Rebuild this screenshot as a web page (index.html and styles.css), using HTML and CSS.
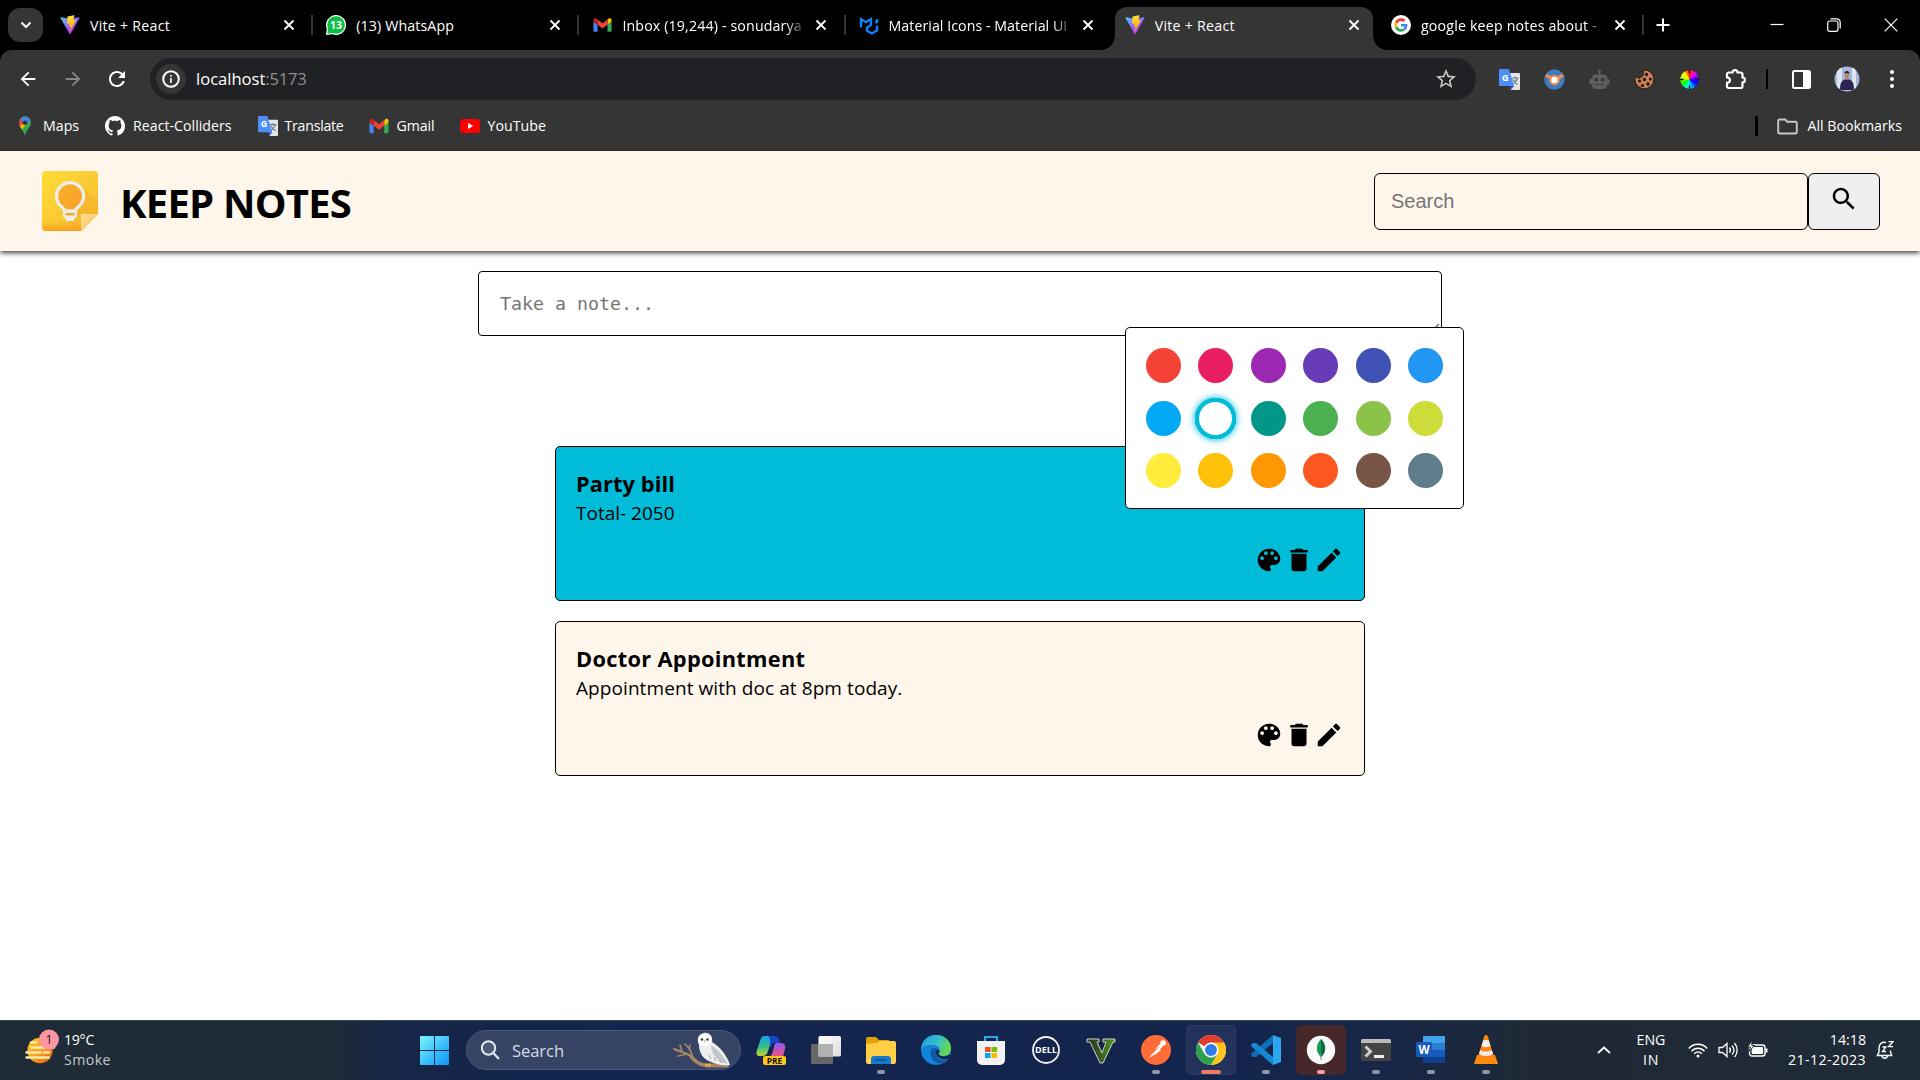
FILE: index.html
```html
<!DOCTYPE html>
<html lang="en">
<head>
<meta charset="utf-8">
<title>Vite + React</title>
<link rel="stylesheet" href="styles.css">
</head>
<body>
<svg class="sprite" aria-hidden="true">
  <defs>
    <linearGradient id="viteA" x1="6" y1="33" x2="235" y2="344" gradientUnits="userSpaceOnUse"><stop stop-color="#41D1FF"/><stop offset="1" stop-color="#BD34FE"/></linearGradient>
    <linearGradient id="viteB" x1="194.651" y1="8.818" x2="236.076" y2="292.989" gradientUnits="userSpaceOnUse"><stop stop-color="#FFEA83"/><stop offset=".083" stop-color="#FFDD35"/><stop offset="1" stop-color="#FFA800"/></linearGradient>
  </defs>
  <symbol id="vite" viewBox="0 0 410 404">
    <path fill="url(#viteA)" d="M399.641 59.5246L215.643 388.545C211.844 395.338 202.084 395.378 198.228 388.618L10.5817 59.5563C6.38087 52.1896 12.6802 43.2665 21.0281 44.7586L205.223 77.6824C206.398 77.8924 207.601 77.8904 208.776 77.6763L389.119 44.8058C397.439 43.2894 403.768 52.1434 399.641 59.5246Z"/>
    <path fill="url(#viteB)" d="M292.965 1.5744L156.801 28.2552C154.563 28.6937 152.906 30.5903 152.771 32.8664L144.395 174.33C144.198 177.662 147.258 180.248 150.51 179.498L188.42 170.749C191.967 169.931 195.172 173.055 194.443 176.622L183.18 231.775C182.422 235.487 185.907 238.661 189.532 237.56L212.947 230.446C216.577 229.344 220.065 232.527 219.297 236.242L201.398 322.875C200.278 328.294 207.486 331.249 210.492 326.603L212.5 323.5L323.454 102.072C325.312 98.3645 322.108 94.137 318.036 94.9228L279.014 102.454C275.347 103.161 272.227 99.746 273.262 96.1583L298.731 7.86689C299.767 4.27314 296.636 0.855181 292.965 1.5744Z"/>
  </symbol>
  <symbol id="gmail" viewBox="50 38 92 74">
    <path fill="#4285f4" d="M58 108h14V74L52 59v43c0 3.32 2.69 6 6 6"/><path fill="#34a853" d="M120 108h14c3.32 0 6-2.69 6-6V59l-20 15"/><path fill="#fbbc04" d="M120 48v26l20-15v-8c0-7.42-8.47-11.65-14.4-7.2"/><path fill="#ea4335" d="M72 74V48l24 18 24-18v26L96 92"/><path fill="#c5221f" d="M52 51v8l20 15V48l-5.6-4.2c-5.94-4.45-14.4-.22-14.4 7.2"/>
  </symbol>
  <symbol id="close" viewBox="0 0 12 12"><path d="M1.500 1.500l9 9m0-9l-9 9" stroke="#fff" stroke-width="1.800" fill="none"/></symbol>
  <symbol id="palette" viewBox="0 0 24 24"><path d="M12 3c-4.970 0-9 4.030-9 9s4.030 9 9 9c.83 0 1.500-.67 1.500-1.500 0-.39-.15-.74-.39-1.010-.23-.26-.38-.61-.38-.99 0-.83.67-1.500 1.500-1.500H16c2.760 0 5-2.240 5-5 0-4.420-4.030-8-9-8zm-5.500 9c-.83 0-1.500-.67-1.500-1.500S5.670 9 6.500 9 8 9.670 8 10.500 7.330 12 6.500 12zm3-4C8.670 8 8 7.330 8 6.500S8.670 5 9.500 5s1.500.67 1.500 1.500S10.330 8 9.500 8zm5 0c-.83 0-1.500-.67-1.500-1.500S13.670 5 14.500 5s1.500.67 1.500 1.500S15.330 8 14.500 8zm3 4c-.83 0-1.500-.67-1.500-1.500S16.670 9 17.500 9s1.500.67 1.500 1.500-.67 1.500-1.500 1.500z"/></symbol>
  <symbol id="trash" viewBox="0 0 24 24"><path d="M6 19c0 1.100.9 2 2 2h8c1.100 0 2-.9 2-2V7H6v12zM19 4h-3.500l-1-1h-5l-1 1H5v2h14V4z"/></symbol>
  <symbol id="pencil" viewBox="0 0 24 24"><path d="M3 17.250V21h3.750L17.810 9.940l-3.750-3.750L3 17.250zM20.710 7.040c.39-.39.39-1.020 0-1.410l-2.340-2.340c-.39-.39-1.020-.39-1.410 0l-1.830 1.830 3.750 3.750 1.830-1.830z"/></symbol>
  <symbol id="arrow" viewBox="0 0 24 24"><path d="M20 11H7.830l5.590-5.590L12 4l-8 8 8 8 1.410-1.410L7.830 13H20v-2z"/></symbol>
</svg>

<div class="tabstrip">
  <div class="tab-search"><svg width="12" height="8" viewBox="0 0 12 8"><path d="M1.500 1.500L6 6l4.500-4.500" fill="none" stroke="#fff" stroke-width="2"/></svg></div>
  <div class="tab">
    <svg class="favicon"><use href="#vite"/></svg><span class="tab-title t1">Vite + React</span><svg class="tab-close"><use href="#close"/></svg>
  </div>
  <div class="tab">
    <svg class="favicon" viewBox="0 0 20 20"><path fill="#fff" d="M10 0a10 10 0 1 1-3.600 19.300L0 20l.8-6.100A10 10 0 0 1 10 0z"/><path fill="#0bc143" d="M10 1.200a8.800 8.800 0 1 1-3.400 16.900L1.500 18.700l.6-5A8.800 8.800 0 0 1 10 1.200z"/><text x="10" y="13.800" text-anchor="middle" class="logo-text" font-size="10.500" fill="#fff">13</text></svg><span class="tab-title t2">(13) WhatsApp</span><svg class="tab-close"><use href="#close"/></svg>
  </div>
  <div class="tab">
    <svg class="favicon gm"><use href="#gmail"/></svg><span class="tab-title t3 fade">Inbox (19,244) - sonudarya</span><svg class="tab-close"><use href="#close"/></svg>
  </div>
  <div class="tab plain">
    <svg class="favicon" viewBox="0 0 20 20"><path d="M2 12.500V4l5 3.200L12 4v6l-4 2.600v3.200l5 2.600 5-3V10.500M18 4v2.800l-1.800 1.100" fill="none" stroke="#0a84ff" stroke-width="2.300"/></svg><span class="tab-title t4 fade">Material Icons - Material UI</span><svg class="tab-close"><use href="#close"/></svg>
  </div>
  <div class="tab active">
    <svg class="favicon"><use href="#vite"/></svg><span class="tab-title t1">Vite + React</span><svg class="tab-close"><use href="#close"/></svg>
  </div>
  <div class="tab">
    <svg class="favicon" viewBox="-12 -12 72 72"><circle cx="24" cy="24" r="36" fill="#fff"/><path fill="#EA4335" d="M24 9.500c3.540 0 6.710 1.220 9.210 3.600l6.850-6.850C35.900 2.380 30.470 0 24 0 14.620 0 6.510 5.380 2.560 13.220l7.980 6.190C12.430 13.720 17.740 9.500 24 9.500z"/><path fill="#4285F4" d="M46.980 24.550c0-1.570-.15-3.090-.38-4.550H24v9.020h12.940c-.58 2.960-2.260 5.480-4.780 7.180l7.730 6c4.510-4.180 7.090-10.360 7.090-17.650z"/><path fill="#FBBC05" d="M10.530 28.590c-.48-1.450-.76-2.990-.76-4.590s.27-3.140.76-4.590l-7.980-6.190C.92 16.460 0 20.120 0 24c0 3.880.92 7.540 2.560 10.780l7.970-6.190z"/><path fill="#34A853" d="M24 48c6.480 0 11.930-2.130 15.890-5.810l-7.730-6c-2.150 1.450-4.920 2.300-8.160 2.300-6.260 0-11.570-4.220-13.470-9.910l-7.980 6.190C6.510 42.620 14.620 48 24 48z"/></svg><span class="tab-title t6 fade">google keep notes about -</span><svg class="tab-close"><use href="#close"/></svg>
  </div>
  <svg class="new-tab" viewBox="0 0 14 14"><path d="M7 .5v13M.5 7h13" stroke="#fff" stroke-width="2"/></svg>
  <div class="window-buttons">
    <svg width="14" height="14" viewBox="0 0 14 14"><path d="M.5 6.500h13" stroke="#fff" stroke-width="1.200"/></svg>
    <svg width="14" height="14" viewBox="0 0 14 14" fill="none" stroke="#fff" stroke-width="1.200"><rect x=".7" y="3" width="10.300" height="10.300" rx="2"/><path d="M3.500.8h6.200a3.500 3.500 0 0 1 3.500 3.500v6.200"/></svg>
    <svg width="14" height="14" viewBox="0 0 14 14"><path d="M.7.7l12.600 12.600m0-12.600L.7 13.300" stroke="#fff" stroke-width="1.200"/></svg>
  </div>
</div>

<div class="toolbar-wrap">
<div class="toolbar">
  <svg class="nav-icon"><use href="#arrow"/></svg>
  <svg class="nav-icon forward"><use href="#arrow"/></svg>
  <svg class="nav-icon reload" viewBox="0 0 24 24"><path d="M17.650 6.350C16.200 4.900 14.210 4 12 4c-4.420 0-7.990 3.580-7.990 8s3.570 8 7.990 8c3.730 0 6.840-2.550 7.730-6h-2.080c-.82 2.330-3.040 4-5.650 4-3.310 0-6-2.690-6-6s2.690-6 6-6c1.660 0 3.140.69 4.220 1.780L13 11h7V4l-2.350 2.350z"/></svg>
  <div class="omnibox">
    <div class="site-info"><svg width="20" height="20" viewBox="0 0 20 20"><circle cx="10" cy="10" r="7.800" fill="none" stroke="#fff" stroke-width="2"/><path d="M9.200 9h1.600v5H9.200zM9.200 6h1.600v1.700H9.200z" fill="#fff"/></svg></div>
    <span class="url">localhost</span><span class="url port">:5173</span>
    <svg class="star" viewBox="0 0 24 24"><path d="M22 9.240l-7.190-.62L12 2 9.190 8.630 2 9.240l5.460 4.730L5.820 21 12 17.270 18.180 21l-1.630-7.030L22 9.240zM12 15.400l-3.760 2.270 1-4.280-3.320-2.880 4.380-.38L12 6.100l1.710 4.040 4.380.38-3.320 2.880 1 4.280L12 15.400z"/></svg>
  </div>
  <div class="extensions">
    <svg class="ext" viewBox="0 0 21 21"><path fill="#e4e4e4" d="M9 4h11a1 1 0 0 1 1 1v15a1 1 0 0 1-1 1h-8z"/><path d="M12.500 9h7M16 7.500V9m2.200 0c-.6 2.600-2.200 4.600-4.600 6M13.800 10.500c1 2 2.400 3.500 4.700 5" fill="none" stroke="#607d8b" stroke-width="1.200"/><path fill="#3545c7" d="M11 17h4l-3.300 4z"/><path fill="#4d8ef7" d="M1 0h9l5 17H1a1 1 0 0 1-1-1V1a1 1 0 0 1 1-1z"/><text x="2.800" y="12" class="logo-text" font-size="9.500" fill="#fff">G</text></svg>
    <svg class="ext" viewBox="0 0 21 21"><circle cx="10.500" cy="10.500" r="10.200" fill="#3d7cc0"/><path d="M.8 7l2.400-2 5 2.500h4.600l5-2.500 2.400 2-4.700 3.500-1.200 3H6.700l-1.200-3z" fill="#ee8a4a"/><circle cx="10.500" cy="11" r="5.300" fill="#ee8a4a"/><circle cx="10.500" cy="11" r="3.200" fill="#fff"/></svg>
    <svg class="ext" viewBox="0 0 21 21"><path d="M10.500 1v5" stroke="#5d5d5d" stroke-width="1.400"/><circle cx="10.500" cy="2.200" r="1.400" fill="#5d5d5d"/><rect x="3" y="5.500" width="15" height="14.500" rx="4" fill="#5d5d5d"/><rect x=".3" y="9.500" width="20.400" height="6" rx="2.500" fill="#5d5d5d"/><path d="M6 9.500h2.500v2.500H6zM12.500 9.500H15v2.500h-2.500zM6 15.500h9" fill="#353535" stroke="#353535" stroke-width=".7"/></svg>
    <svg class="ext" viewBox="0 0 21 21"><path d="M9 1c1 1 1 2.500 0 3.500 1 1.500 0 3-1.500 3-.5 1.800-3 2.200-4.500 1L1.500 7A9.500 9.500 0 1 0 9 1z" fill="#c98055" stroke="#1d1510" stroke-width="1"/><g fill="#20140d"><circle cx="12.500" cy="5.500" r="1.700"/><circle cx="16.300" cy="10" r="1.500"/><circle cx="10.500" cy="10.500" r="1.700"/><circle cx="5.500" cy="12" r="1.500"/><circle cx="8.500" cy="16.500" r="1.600"/><circle cx="14" cy="15" r="1.700"/></g></svg>
    <div class="ext wheel"><svg viewBox="0 0 21 21" width="21" height="21" fill="none" stroke="#111" stroke-width="1.300"><path d="M10.500 .5v4M10.500 16.500v4M.5 10.500h4M16.500 10.500h4"/></svg></div>
    <svg class="ext puzzle" viewBox="0 0 21 21"><path d="M2 5.200c0-1 .7-1.700 1.700-1.700H7.500c0-3.200 5-3.200 5 0h3c1.200 0 2 .8 2 1.900V8.500c3.200 0 3.200 5 0 5v3.700c0 1-.8 1.800-1.800 1.800H3.600c-.9 0-1.600-.7-1.600-1.600v-3.600c4 0 4-5.500 0-5.500z" fill="none" stroke="#fff" stroke-width="2.200"/></svg>
    <span class="bar"></span>
    <svg class="panel" viewBox="0 0 19 19"><rect x="1" y="1" width="17" height="17" rx="1.500" fill="none" stroke="#fff" stroke-width="2"/><path d="M11 1h7v17h-7z" fill="#fff"/></svg>
    <svg class="avatar" viewBox="0 0 26 26"><defs><clipPath id="av"><circle cx="13" cy="13" r="12.500"/></clipPath></defs><g clip-path="url(#av)"><path fill="#a3b7dc" d="M0 0h26v26H0z"/><path fill="#dfe6f2" d="M3 0h5v26H3zM18 0h4v26h-4z"/><path fill="#2d2350" d="M6 24c0-6 1-9 4.500-10.500h5C19 15 20 18 20 24z"/><path fill="#b98567" d="M11 6h4v6l-2 2-2-2z"/><path fill="#1a1416" d="M10.500 8c-.5-4 5-4 5 0l-1-1h-3z"/></g></svg>
    <svg class="menu-dots" viewBox="0 0 6 20" fill="#fff"><circle cx="3" cy="3" r="2"/><circle cx="3" cy="10" r="2"/><circle cx="3" cy="17" r="2"/></svg>
  </div>
</div>
<div class="bookmarks">
  <svg class="bm-icon" viewBox="-3 0 20 20"><path d="M7 0a7 7 0 0 1 6 6.500C13 11.500 8.500 13 7 20 5.500 13.500 1 12 1 7a6.500 6.500 0 0 1 6-7z" fill="#34a853"/><path d="M2.300 2.800L6 5.700 2 10.500C.5 8 .8 5 2.300 2.800z" fill="#ea4335"/><path d="M2 10.500L10 2.500 12 4 4 13.500z" fill="#fbbc04"/><path d="M2.300 2.800A6.500 6.500 0 0 1 12.500 4L9.500 7.500 5 6z" fill="#4285f4"/><circle cx="7" cy="6.800" r="2.300" fill="#333"/></svg>
  <span class="bm b1">Maps</span>
  <svg class="bm-icon" viewBox="0 0 16 16"><path fill="#fff" d="M8 0C3.580 0 0 3.580 0 8c0 3.540 2.290 6.530 5.470 7.590.4.07.55-.17.55-.38 0-.19-.01-.82-.01-1.490-2.010.37-2.530-.49-2.690-.94-.09-.23-.48-.94-.82-1.130-.28-.15-.68-.52-.01-.53.63-.01 1.080.58 1.230.82.72 1.210 1.870.87 2.330.66.07-.52.28-.87.51-1.070-1.780-.2-3.640-.89-3.640-3.950 0-.87.31-1.590.82-2.150-.08-.2-.36-1.020.08-2.120 0 0 .67-.21 2.200.82.64-.18 1.320-.27 2-.27.68 0 1.360.09 2 .27 1.530-1.040 2.200-.82 2.200-.82.44 1.100.16 1.920.08 2.120.51.56.82 1.270.82 2.150 0 3.070-1.870 3.750-3.650 3.950.29.25.54.73.54 1.480 0 1.070-.01 1.930-.01 2.200 0 .21.15.46.55.38A8.013 8.013 0 0 0 16 8c0-4.420-3.580-8-8-8z"/></svg>
  <span class="bm b2">React-Colliders</span>
  <svg class="bm-icon tr" viewBox="0 0 21 21"><path fill="#e4e4e4" d="M9 4h11a1 1 0 0 1 1 1v15a1 1 0 0 1-1 1h-8z"/><path d="M12.500 9h7M16 7.500V9m2.200 0c-.6 2.600-2.200 4.600-4.600 6M13.800 10.500c1 2 2.400 3.500 4.700 5" fill="none" stroke="#607d8b" stroke-width="1.200"/><path fill="#3545c7" d="M11 17h4l-3.300 4z"/><path fill="#4d8ef7" d="M1 0h9l5 17H1a1 1 0 0 1-1-1V1a1 1 0 0 1 1-1z"/><text x="2.800" y="12" class="logo-text" font-size="9.500" fill="#fff">G</text></svg>
  <span class="bm b3">Translate</span>
  <svg class="bm-icon"><use href="#gmail"/></svg>
  <span class="bm b4">Gmail</span>
  <svg class="bm-icon" viewBox="0 0 20 20"><rect x="0" y="3" width="20" height="14" rx="3.500" fill="#f00"/><path d="M8 7l5.200 3L8 13z" fill="#fff"/></svg>
  <span class="bm b5">YouTube</span>
  <span class="bm-bar"></span>
  <svg class="folder" viewBox="0 0 21 17"><path d="M2.500 1.500h5.700l2 2.300h8.300c.8 0 1.300.5 1.300 1.300v9c0 .8-.5 1.400-1.300 1.400h-16c-.8 0-1.300-.6-1.300-1.400V2.900c0-.8.5-1.400 1.300-1.400z" fill="none" stroke="#c7c7c7" stroke-width="1.900"/></svg>
  <span class="bm b6">All Bookmarks</span>
</div>
</div>

<header class="app-header">
  <svg class="logo" viewBox="0 0 56 60">
    <defs>
      <linearGradient id="kp" x1="0" y1="0" x2="1" y2="1"><stop offset="0" stop-color="#ffdb38"/><stop offset=".3" stop-color="#fdd335"/><stop offset="1" stop-color="#f4b62c"/></linearGradient>
      <linearGradient id="kb" x1="0" y1="0" x2="0" y2="1"><stop offset="0" stop-color="#f9a825" stop-opacity="0"/><stop offset="1" stop-color="#f9a01f"/></linearGradient>
      <linearGradient id="kl" x1="0" y1="0" x2="1" y2="1"><stop offset="0" stop-color="#fbb62b"/><stop offset="1" stop-color="#f79c28"/></linearGradient>
      <linearGradient id="kf" x1="0" y1="0" x2="1" y2="1"><stop offset="0" stop-color="#ffe09a"/><stop offset="1" stop-color="#f9bc45"/></linearGradient>
    </defs>
    <path fill="url(#kp)" d="M4 0h48a4 4 0 0 1 4 4v39L39 60H4a4 4 0 0 1-4-4V4a4 4 0 0 1 4-4z"/>
    <path fill="#f6b42c" opacity=".7" d="M39 16l17 15v12H41L35 50l6 8-2 2-14-11 8-8z"/>
    <path fill="url(#kb)" d="M0 50h49L39 60H4a4 4 0 0 1-4-4z"/>
    <circle cx="28" cy="25" r="13" fill="url(#kl)"/>
    <path d="M22.500 40c0-2-1-2.600-3-4.400a13.500 13.500 0 1 1 17 0c-2 1.800-3 2.400-3 4.400z" fill="none" stroke="#ededed" stroke-width="3.200"/>
    <path d="M21 39h14v6a2 2 0 0 1-2 2l-1.500 3h-7L23 47a2 2 0 0 1-2-2z" fill="#ededed"/><path d="M23.500 42h9v2.500h-9z" fill="#f5a92b"/>
    <path fill="url(#kf)" d="M39 60V43h17z"/>
  </svg>
  <h1 class="brand">KEEP NOTES</h1>
  <div class="search">Search</div>
  <div class="search-button"><svg viewBox="0 0 24 24" width="30" height="30"><path d="M15.500 14h-.79l-.28-.27C15.410 12.590 16 11.110 16 9.500 16 5.910 13.090 3 9.500 3S3 5.910 3 9.500 5.910 16 9.500 16c1.610 0 3.090-.59 4.230-1.570l.27.28v.79l5 4.990L20.490 19l-4.990-5zm-6 0C7.010 14 5 11.990 5 9.500S7.010 5 9.500 5 14 7.010 14 9.500 11.990 14 9.500 14z"/></svg></div>
</header>

<main class="page">
  <div class="compose"><span>Take a note...</span><svg class="grip" viewBox="0 0 12 12"><path d="M1 11L11 1M7 11l4-4" stroke="#666" stroke-width="1.300"/></svg></div>
  <section class="notes">
    <article class="note cyan">
      <h2 class="n1">Party bill</h2>
      <p class="n2">Total- 2050</p>
      <div class="actions"><svg><use href="#palette"/></svg><svg><use href="#trash"/></svg><svg><use href="#pencil"/></svg></div>
      <div class="picker">
        <i class="red"></i><i class="pink"></i><i class="purple"></i><i class="violet"></i><i class="indigo"></i><i class="blue"></i>
        <i class="sky"></i><i class="selected"></i><i class="teal"></i><i class="green"></i><i class="light-green"></i><i class="lime"></i>
        <i class="yellow"></i><i class="amber"></i><i class="orange"></i><i class="deep-orange"></i><i class="brown"></i><i class="slate"></i>
      </div>
    </article>
    <article class="note">
      <h2 class="n3">Doctor Appointment</h2>
      <p class="n4">Appointment with doc at 8pm today.</p>
      <div class="actions"><svg><use href="#palette"/></svg><svg><use href="#trash"/></svg><svg><use href="#pencil"/></svg></div>
    </article>
  </section>
</main>

<footer class="taskbar">
  <div class="weather">
    <svg width="36" height="36" viewBox="0 0 36 36"><defs><linearGradient id="sun" x1="0" y1="0" x2="1" y2="1"><stop offset="0" stop-color="#ffc61a"/><stop offset=".5" stop-color="#fba31a"/><stop offset="1" stop-color="#e0560f"/></linearGradient></defs><circle cx="16" cy="21.500" r="12.700" fill="url(#sun)"/><g stroke="#ffe9b0" stroke-width="2.500" stroke-linecap="round"><path d="M7 13.500h5M7 18.500h23M2.500 23.500h14M20 23.500h5M2.500 28.500h22"/></g><circle cx="25" cy="10.500" r="10" fill="#fb95a3"/><text x="25" y="15" text-anchor="middle" class="badge-text" font-size="13">1</text></svg>
    <div class="weather-text"><span class="w1">19°C</span><span class="w2">Smoke</span></div>
  </div>
  <svg class="start" viewBox="0 0 29 29"><defs><linearGradient id="win" x1="0" y1="0" x2="1" y2="1" ><stop offset="0" stop-color="#7df3fd"/><stop offset="1" stop-color="#0a95fb"/></linearGradient></defs><path fill="url(#win)" d="M1 0h13v14H0V1a1 1 0 0 1 1-1zM15 0h13a1 1 0 0 1 1 1v13H15zM0 15h14v14H1a1 1 0 0 1-1-1zM15 15h14v13a1 1 0 0 1-1 1H15z"/></svg>
  <div class="task-search">
    <svg width="20" height="20" viewBox="0 0 20 20"><circle cx="8.500" cy="8" r="6.700" fill="rgba(255,255,255,.12)" stroke="#e3e7ee" stroke-width="2"/><path d="M13.300 13l5 5.200" stroke="#e3e7ee" stroke-width="2.300" stroke-linecap="round"/></svg>
    <span class="ts">Search</span>
    <svg class="owl" width="60" height="36" viewBox="0 0 60 36">
      <g fill="none" stroke="#a58863" stroke-linecap="round" stroke-linejoin="round"><path d="M1 17c7 3 13 4 18 8" stroke-width="2"/><path d="M18 24c4 6 8 9 16 9.500h20" stroke-width="4"/><path d="M9 19.500L7 13M19 25c0-6-3-9-7-13M16 17l1-4M14 22L5 24" stroke-width="1.700"/></g>
      <path d="M31 1c6-1 9 4 8 9 8 5 15 13 18 23-8 1-14-1-19-3-8-3-12-9-12-17C23 6 26 2 31 1z" fill="#eceef0"/>
      <path d="M38 13c7 4 12 11 17 19-9-1-16-8-17-19z" fill="#c3c7cb"/><path d="M25 8c0-7 12-8 13-1 1 5-2 7-6 7-3 0-7-2-7-6z" fill="#fff"/>
      <path d="M36 23l2 4M41 25l2 4M46 28l3 3" stroke="#999fa5" stroke-width="1"/>
      <circle cx="29" cy="7.500" r="1.200" fill="#333"/><circle cx="34.500" cy="7.500" r="1.200" fill="#333"/><path d="M31 8.500h1.600l-.8 2.500z" fill="#c8926b"/><path d="M32 33h6" stroke="#f3a73c" stroke-width="2.500"/>
    </svg>
  </div>
  <div class="apps">
    <div class="app"><svg viewBox="0 0 30 30"><defs><linearGradient id="cpa" x1="0" y1="0" x2="0" y2="1"><stop offset="0" stop-color="#1fa0ee"/><stop offset=".5" stop-color="#2dbb8e"/><stop offset="1" stop-color="#c4d32d"/></linearGradient><linearGradient id="cpb" x1="0" y1="0" x2="0" y2="1"><stop offset="0" stop-color="#8d5bf1"/><stop offset="1" stop-color="#f0527a"/></linearGradient></defs><path fill="url(#cpa)" d="M9 1h10c-3 1-4 5-5 9l-2 6c-1 4-3 5-6 5H4c-4 0-4-3-3-6l3-9c1-3 2-5 5-5z"/><path fill="#1743c4" d="M12 1h7c3 0 4 2 5 7h-5c-2 0-3 1-4 4h-1c0-5 1-9-2-11z"/><path fill="url(#cpb)" d="M20 8h5c4 0 5 3 4 6l-2 8H13c3-1 4-6 5-10 0-2 1-3 2-4z"/><rect x="7" y="21" width="23" height="9" rx="2" fill="#ffc61a"/><text x="18.500" y="28.500" text-anchor="middle" class="logo-text" font-size="8.300" fill="#111">PRE</text></svg></div>
    <div class="app"><svg viewBox="0 0 30 30"><defs><linearGradient id="tv" x1="0" y1="0" x2="1" y2="1"><stop stop-color="#fff"/><stop offset="1" stop-color="#ddd"/></linearGradient></defs><rect x="0" y="9" width="22" height="20" rx="1.500" fill="#666"/><rect x="7.500" y="1" width="22.500" height="20.500" rx="1.500" fill="url(#tv)"/><path d="M7.500 9H22v12.500H7.500z" fill="#b1b1b1"/></svg></div>
    <div class="app"><svg viewBox="0 0 30 30"><path d="M0 4a2 2 0 0 1 2-2h8l3 3h10v8H0z" fill="#e3a008"/><path d="M0 9l11-1 2-2h15a2 2 0 0 1 2 2v19a2 2 0 0 1-2 2H2a2 2 0 0 1-2-2z" fill="#ffcf45"/><path d="M5 29v-5a3 3 0 0 1 3-3h14a3 3 0 0 1 3 3v5z" fill="#1a79cd"/><path d="M9 25h12" stroke="#0d4f92" stroke-width="1.500"/></svg><b></b></div>
    <div class="app"><svg viewBox="0 0 30 30"><defs><linearGradient id="ea" x1="0" y1="0" x2="1" y2=".4"><stop offset="0" stop-color="#1b9de2"/><stop offset=".6" stop-color="#35c1c9"/><stop offset="1" stop-color="#66d84b"/></linearGradient></defs><circle cx="15" cy="15" r="15" fill="#1382d8"/><path fill="url(#ea)" d="M0 14C1 5 7 0 15 0c9 0 15 6 15 13 0 5-3 8-8 8-4 0-5-2-4-3 1-2 2-7-5-8C7 9 2 11 0 14z"/><path fill="#0c59a4" d="M10 15c-2 9 5 15 13 13 3-1 4-3 5-4-7 3-13 0-13-5 0-2 0-3 1-4-1-3-5-2-6 0z"/><path fill="#14254c" d="M16 14.500c2 0 3.500 1 2 3-1 1.500 0 3 3 3.700 3 .5 6-.5 8.500-2l-1 4c-6 2.500-11 .5-13-3.500-.7-2-.5-4 .5-5.200z"/></svg></div>
    <div class="app"><svg viewBox="0 0 30 30"><path d="M9 7V2h12v5" fill="none" stroke="#28a8ea" stroke-width="2.200"/><path d="M1 6h28v19a5 5 0 0 1-5 5H6a5 5 0 0 1-5-5z" fill="#f2f2f2"/><path fill="#f25022" d="M9 12h5.500v5H9z"/><path fill="#7fba00" d="M15.500 12H21v5h-5.500z"/><path fill="#00a4ef" d="M9 18h5.500v5H9z"/><path fill="#ffb900" d="M15.500 18H21v5h-5.500z"/></svg></div>
    <div class="app"><svg viewBox="0 0 30 30"><circle cx="15" cy="15" r="13" fill="none" stroke="#f1f1f1" stroke-width="1.800"/><text x="15" y="18.200" text-anchor="middle" class="logo-text" font-size="8.300" fill="#fff" textLength="22" lengthAdjust="spacingAndGlyphs">DELL</text></svg></div>
    <div class="app"><svg viewBox="0 0 30 30"><defs><linearGradient id="vg" x1="0" y1="0" x2="1" y2="0"><stop offset=".2" stop-color="#2f3e24"/><stop offset="1" stop-color="#4f9c20"/></linearGradient></defs><path d="M1 4h12v3h-2l5 11 4-11h-3V4h12v3h-2L17 28h-3L4 7H1z" fill="url(#vg)" stroke="#cfd0c8" stroke-width="1"/></svg></div>
    <div class="app"><svg viewBox="0 0 30 30"><circle cx="15" cy="15" r="15" fill="#ff6c37"/><path d="M7 23l10-11 3 3-5 4z" fill="#fff"/><path d="M15 13l4-4 3 2-5 5z" fill="#fff"/><circle cx="22" cy="8" r="2.800" fill="#fff"/><path d="M8 22l10-10" stroke="#ff6c37" stroke-width=".7"/></svg><b></b></div>
    <div class="app current"><svg viewBox="0 0 48 48"><circle cx="24" cy="24" r="24" fill="#fff"/><path d="M24 24L3.200 12A24 24 0 0 1 44.800 12z" fill="#e33b2e"/><path d="M24 12h20.800A24 24 0 0 1 24 48l10.400-18z" fill="#fcc41d"/><path d="M3.200 12A24 24 0 0 0 24 48l10.400-18L24 36 13.600 30z" fill="#2ea04d"/><circle cx="24" cy="24" r="12" fill="#fff"/><circle cx="24" cy="24" r="9.500" fill="#2f7bea"/></svg><b></b></div>
    <div class="app"><svg viewBox="0 0 30 30"><path d="M22 0v8L5 22H2l-2-2v-1z" fill="#0f6fb8"/><path d="M22 30v-8L5 8H2l-2 2v1z" fill="#1689d5"/><path d="M22 0l8 3v24l-8 3z" fill="#2ba7f2"/></svg><b></b></div>
    <div class="app alert"><svg viewBox="0 0 30 30"><circle cx="15" cy="15" r="14.200" fill="#fafafa"/><path d="M15 4c5 5 6 13 0 18-6-5-5-13 0-18z" fill="#12a150"/><path d="M15 4c5 5 6 13 0 18z" fill="#0b6b45"/><path d="M14.600 18h.9v7h-.9z" fill="#77837c"/></svg><b></b></div>
    <div class="app"><svg viewBox="0 0 30 30"><rect y="4" width="30" height="22" rx="1.500" fill="#444"/><path d="M0 8V5.500A1.500 1.500 0 0 1 1.500 4h27A1.500 1.500 0 0 1 30 5.500V8z" fill="#bbb"/><path d="M4.500 11.500l5 5-5 5" fill="none" stroke="#ccc" stroke-width="3"/><path d="M13 21.500h10" stroke="#eee" stroke-width="3"/></svg><b></b></div>
    <div class="app"><svg viewBox="0 0 30 30"><path fill="#41a5ee" d="M8 1h20a1 1 0 0 1 1 1v6H7V2a1 1 0 0 1 1-1z"/><path fill="#2b7cd3" d="M7 8h22v7H7z"/><path fill="#185abd" d="M7 15h22v7H7z"/><path fill="#103f91" d="M7 22h22v5a1 1 0 0 1-1 1H8a1 1 0 0 1-1-1z"/><rect x="0" y="7" width="16" height="15" rx="1.500" fill="#185abd"/><text x="8" y="18.600" text-anchor="middle" class="logo-text" font-size="11.500" fill="#fff">W</text></svg><b></b></div>
    <div class="app"><svg viewBox="0 0 30 30"><path d="M6 20h18l3 9H3z" fill="#ff8a0d"/><path d="M15 0c1 0 1.500.5 2 2l6 20c-2 4-14 4-16 0l6-20c.5-1.500 1-2 2-2z" fill="#ff8510"/><path d="M12.400 5h5.200l1.800 6c-1.500 1.500-7.300 1.500-8.800 0z" fill="#eee"/><path d="M9.200 15c2 2 9.600 2 11.600 0l1.200 4c-2.500 2.500-11.500 2.500-14 0z" fill="#eee"/></svg><b></b></div>
  </div>
  <div class="tray">
    <svg class="chev" width="14" height="8" viewBox="0 0 14 8"><path d="M1 7l6-5.500L13 7" fill="none" stroke="#fff" stroke-width="1.800"/></svg>
    <div class="lang"><span>ENG</span><span class="l2">IN</span></div>
    <svg class="ti" viewBox="0 0 20 20" fill="none" stroke="#fff" stroke-width="1.400"><path d="M.8 8.500c5-5.600 13.400-5.600 18.400 0M3.500 11.200c3.600-4 9.400-4 13 0M6.200 13.700c2.200-2.400 5.400-2.400 7.600 0"/><circle cx="10" cy="16" r="1.500" fill="#fff" stroke="none"/></svg>
    <svg class="ti" viewBox="0 0 20 20" fill="none" stroke="#fff" stroke-width="1.300"><path d="M1 7.500h3.500L9 3.500v13l-4.500-4H1z"/><path d="M11.500 7.500c1.200 1.600 1.200 3.700 0 5.200M14 5.500c2.400 2.700 2.400 6.400 0 9.100M16.500 3c3.500 4 3.500 10 0 14"/></svg>
    <svg class="ti" viewBox="0 0 20 20"><rect x="1.500" y="5" width="15.500" height="11" rx="2.500" fill="none" stroke="#fff" stroke-width="1.400"/><rect x="3.600" y="7" width="11.500" height="7" rx="1" fill="#fff"/><path d="M17.500 8.500h2v4h-2z" fill="#fff"/><path d="M4 .5L-.3 7h2.800L1 11.500 6.500 5.500H3.800z" fill="#fff" stroke="#1f2b36" stroke-width="1"/></svg>
    <div class="clock"><span>14:18</span><span class="c2">21-12-2023</span></div>
    <svg class="bell" viewBox="0 0 18 20" fill="none" stroke="#fff" stroke-width="1.400"><path d="M10 2.500C5.500 1.500 3 4.500 3 8v4L1.300 15.500h14.400L14.500 12v-1.500M6 16c.5 3 5 3 5.500 0"/><path d="M6.500 7h3.300l-3.300 4.500h3.500M12.500 1.700H17l-4.500 5H17" stroke-width="1.300"/></svg>
  </div>
</footer>
</body>
</html>
```
FILE: styles.css
```css
* { box-sizing: border-box; }
body { margin: 0; width: 1920px; height: 1080px; overflow: hidden; display: flex; flex-direction: column; background: #fff; color: #000; font-family: "Open Sans", "Noto Sans", sans-serif; }
svg { display: block; flex: none; }
span { white-space: nowrap; }
.sprite { position: absolute; width: 0; height: 0; }
.logo-text { font-family: "Open Sans", sans-serif; font-weight: 700; }
.badge-text { font-family: "Open Sans", sans-serif; fill: #222; }

/* Tab strip */
.tabstrip { height: 50px; flex: none; display: flex; align-items: center; background: #000; color: #fff; }
.tab-search { width: 35px; height: 34px; margin: 0 3px 0 8px; border-radius: 12px; background: #353535; display: flex; align-items: center; justify-content: center; }
.tab { position: relative; width: 266.2px; height: 50px; padding: 0 17px 0 14px; display: flex; align-items: center; }
.tab::after { content: ""; width: 2px; height: 20px; position: absolute; right: -1px; top: 15px; background: #353535; }
.tab.plain::after { display: none; }
.favicon { width: 20px; height: 20px; margin-right: 10px; }
.gm { width: 19px; margin: 0 10px 0 1px; }
.tab-title { width: 182px; flex: none; overflow: hidden; font-size: 14.2px; line-height: 22px; margin-right: 11px; padding-top: 1px; }
.t1 { letter-spacing: .25px; }
.t2 { letter-spacing: .14px; }
.t3 { letter-spacing: .15px; }
.t4 { letter-spacing: .05px; }
.t6 { letter-spacing: .19px; }
.fade { -webkit-mask-image: linear-gradient(90deg, #000 90%, rgba(0, 0, 0, .15)); mask-image: linear-gradient(90deg, #000 90%, rgba(0, 0, 0, .15)); }
.tab-close { width: 12px; height: 12px; }
.tab.active { z-index: 0; }
.tab.active::before { content: ""; position: absolute; z-index: -1; left: 4px; right: 4px; top: 7px; bottom: 0; border-radius: 12px 12px 0 0; background: #353535; }
.tab.active::after { width: auto; height: 14px; left: -10px; right: -10px; top: 36px; z-index: -1; background: radial-gradient(circle at 0 0, transparent 13.5px, #353535 14px) left / 14px 14px no-repeat, radial-gradient(circle at 100% 0, transparent 13.5px, #353535 14px) right / 14px 14px no-repeat; }
.new-tab { width: 14px; height: 14px; margin-left: 13px; }
.window-buttons { display: flex; gap: 43px; margin-left: auto; margin-right: 22px; }

/* Toolbar and bookmarks */
.toolbar-wrap { height: 101px; flex: none; background: #000; color: #fff; display: flex; flex-direction: column; }
.toolbar { height: 58px; padding: 8px 25px 8px 17px; display: flex; align-items: center; background: #353535; border-radius: 12px 12px 0 0; }
.nav-icon { width: 22px; height: 22px; fill: #fff; margin-right: 22.5px; }
.forward { fill: #858585; transform: scaleX(-1); }
.reload { width: 24px; height: 24px; margin: 0 21px 0 -1px; }
.omnibox { width: 1327px; height: 42px; border-radius: 21px; background: #202124; padding: 0 18px 0 6px; display: flex; align-items: center; }
.site-info { width: 30px; height: 30px; border-radius: 50%; background: #353535; display: flex; align-items: center; justify-content: center; margin-right: 10px; }
.url { font-size: 16.6px; line-height: 24px; letter-spacing: -.02px; }
.port { color: #8f8f8f; letter-spacing: -.22px; }
.star { width: 24px; height: 24px; fill: #c7c7c7; margin-left: auto; }
.extensions { flex: 1; display: flex; align-items: center; margin-left: 23px; }
.ext { width: 21px; height: 21px; margin-right: 24px; }
.wheel { border-radius: 50%; background: radial-gradient(circle at 50% 50%, transparent 9px, #353535 9.5px), conic-gradient(#ff2a00, #f0f, #50f, #00f, #0af, #0fc, #0f0, #cf0, #ff0, #f00); }
.puzzle { margin: 0 20px 0 1px; }
.bar { width: 2px; height: 20px; background: #000; margin-right: 24px; }
.panel { width: 19px; height: 19px; margin-right: 23px; }
.avatar { width: 26px; height: 26px; margin-right: 29px; }
.menu-dots { width: 6px; height: 20px; }
.bookmarks { height: 43px; flex: none; padding: 0 18px 7px 15px; display: flex; align-items: center; background: #353535; }
.bm-icon { width: 20px; height: 20px; margin-right: 8px; }
.tr { margin-right: 7px; }
.bm { font-size: 14.2px; line-height: 22px; margin-right: 25px; }
.b1, .b2 { margin-right: 26px; }
.b3 { letter-spacing: -.27px; }
.b4 { letter-spacing: -.1px; }
.bm-bar { width: 3px; height: 20px; border-radius: 1px; background: #000; margin-left: auto; margin-right: 19px; }
.folder { width: 21px; height: 17px; margin-right: 9px; }
.b6 { margin-right: 0; }

/* App header */
.app-header { height: 100px; flex: none; position: relative; padding: 0 40px 0 42px; display: flex; align-items: center; background: #fff6eb; box-shadow: 0 2px 5px rgba(0, 0, 0, .75); }
.logo { width: 56px; height: 60px; }
.brand { margin: 0 auto 0 22px; padding-top: 3px; font-size: 40px; line-height: 60px; font-weight: 700; letter-spacing: -.78px; }
.search { width: 434px; height: 57px; border: 1px solid #000; border-radius: 6px; padding: 0 16px; font: 20px/54px "Liberation Sans", sans-serif; color: #757575; }
.search-button { width: 72px; height: 57px; border: 1px solid #000; border-radius: 6px; background: #efefef; padding: 10px 0 0 20px; }

/* Notes */
.page { flex: 1; padding-top: 20px; display: flex; flex-direction: column; align-items: center; }
.compose { width: 964px; height: 65px; display: flex; justify-content: space-between; border: 1px solid #000; border-radius: 4px; padding: 0 1px 0 21px; color: #757575; font: 18.27px/64px "DejaVu Sans Mono", monospace; }
.grip { width: 12px; height: 12px; align-self: flex-end; }
.notes { margin-top: 110px; display: flex; flex-direction: column; gap: 20px; }
.note { position: relative; width: 810px; height: 155px; border: 1px solid #000; border-radius: 5px; padding: 20px; background: #fff6eb; }
.cyan { background: #00bcd8; }
.note h2 { margin: 0; font-size: 21.8px; line-height: 33px; }
.note p { margin: 0; font-size: 19px; line-height: 27px; }
.n1 { letter-spacing: .1px; }
.n3 { letter-spacing: .3px; }
.n4 { letter-spacing: .08px; }
.actions { display: flex; justify-content: flex-end; margin-top: 18px; }
.actions svg { width: 30px; height: 30px; }
.picker { position: absolute; left: 569px; top: -120px; width: 339px; height: 182px; border: 1px solid #000; border-radius: 5px; background: #fff; padding: 20px 0 0 19.9px; display: grid; grid-template-columns: repeat(6, 35px); grid-auto-rows: 35px; gap: 17.5px; align-content: start; }
.picker i { border-radius: 50%; }
.red { background: #f44336; } .pink { background: #e91e63; } .purple { background: #9c27b0; } .violet { background: #673ab7; } .indigo { background: #3f51b5; } .blue { background: #2196f3; }
.sky { background: #03a9f4; } .teal { background: #009688; } .green { background: #4caf50; } .light-green { background: #8bc34a; } .lime { background: #cddc39; }
.yellow { background: #ffeb3b; } .amber { background: #ffc107; } .orange { background: #ff9800; } .deep-orange { background: #ff5722; } .brown { background: #795548; } .slate { background: #607d8b; }
.selected { transform: scale(1.2); box-shadow: inset 0 0 0 3.75px #00bcd8, 0 0 6px #00bcd8; }

/* Taskbar */
.taskbar { height: 60px; flex: none; display: flex; align-items: center; color: #fff; box-shadow: inset 0 1px #3b4852; background: linear-gradient(90deg, #1f2b36 0, #1f2b36 330px, #152647 390px, #13244f 640px, #14254c 1250px, #182746 1400px, #1f2936 1530px, #1f2b36 100%); }
.weather { width: 420px; padding-left: 24px; display: flex; align-items: flex-start; }
.weather svg { margin-top: -1.5px; }
.weather-text, .lang, .clock { display: flex; flex-direction: column; font-size: 14.2px; line-height: 20px; }
.weather-text { margin-left: 4px; }
.w1 { letter-spacing: -.3px; }
.w2 { color: #c5cacf; letter-spacing: .42px; }
.start { width: 29px; height: 29px; margin-right: 17px; }
.task-search { width: 275px; height: 40px; border-radius: 20px; border: 1px solid #4b587a; background: #354364; display: flex; align-items: center; padding: 0 7px 0 13px; }
.ts { font-size: 16.6px; margin-left: 12px; color: #d7dbe3; letter-spacing: -.09px; }
.owl { margin-left: auto; }
.apps { display: flex; gap: 5px; margin-left: 5px; }
.app { width: 50px; height: 50px; border-radius: 5px; display: flex; flex-direction: column; align-items: center; padding-top: 10px; gap: 5px; }
.app svg { width: 30px; height: 30px; }
.app b { width: 8px; height: 4px; border-radius: 2px; background: #8f98ab; }
.current { background: #22325a; box-shadow: inset 0 0 0 1px #2d3c61; }
.current b { width: 20px; background: #f47b63; }
.alert { background: #46282b; }
.alert b { background: #ff9aa6; }
.tray { display: flex; align-items: center; margin-left: auto; padding-right: 26px; }
.chev { margin-right: 20px; }
.lang { width: 40px; align-items: center; margin-right: 17px; }
.l2 { letter-spacing: .6px; }
.ti { width: 20px; height: 20px; margin-right: 10px; }
.clock { width: 88px; align-items: flex-end; margin-right: 10px; }
.c2 { letter-spacing: .4px; }
.bell { width: 18px; height: 20px; }
```
